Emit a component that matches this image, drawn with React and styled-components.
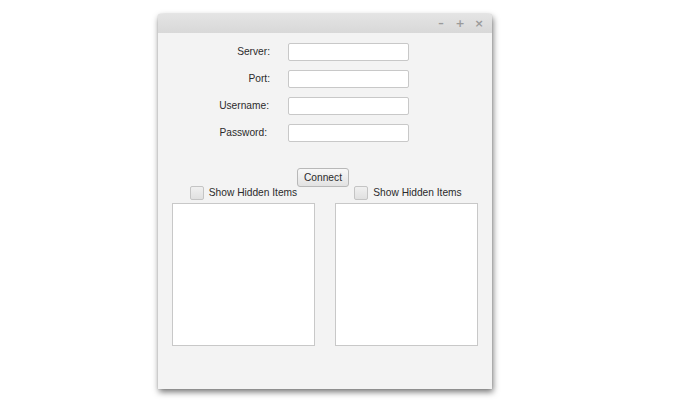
import React, { useState } from "react";
import styled, { createGlobalStyle } from "styled-components";

const GlobalStyle = createGlobalStyle`
  html, body {
    margin: 0;
    padding: 0;
    background: #ffffff;
    font-family: "Liberation Sans", "Open Sans", sans-serif;
  }
`;

const Page = styled.div`
  width: 700px;
  height: 400px;
  padding: 14px 0 0 158px;
  box-sizing: border-box;
`;

const Window = styled.div`
  width: 334px;
  height: 375px;
  background: #f3f3f3;
  border-radius: 3px 3px 0 0;
  box-shadow: 1px 3px 6px rgba(0, 0, 0, 0.55), 0 0 1px rgba(0, 0, 0, 0.3);
  display: flex;
  flex-direction: column;
`;

const TitleBar = styled.div`
  height: 19px;
  background: linear-gradient(#e4e4e4, #d8d8d8);
  border-radius: 3px 3px 0 0;
  display: flex;
  justify-content: flex-end;
  align-items: center;
  gap: 9px;
  padding-right: 8px;
`;

const TitleButton = styled.span`
  width: 10px;
  text-align: center;
  font-family: "DejaVu Sans", sans-serif;
  font-size: 11px;
  line-height: 11px;
  color: #9a9a9a;
  font-weight: bold;
`;

const Form = styled.div`
  display: grid;
  grid-template-columns: 112px 121px;
  column-gap: 18px;
  row-gap: 9px;
  padding-top: 10px;
`;

const Label = styled.label`
  text-align: right;
  font-size: 10.2px;
  line-height: 18px;
  color: #2b2b2b;
  padding-right: ${(p) => p.$shift || 0}px;
`;

const Input = styled.input`
  height: 18px;
  box-sizing: border-box;
  border: 1px solid #c8c8c8;
  border-radius: 2px;
  background: #fff;
  padding: 0 4px;
  font-size: 10px;
  outline: none;
`;

const ButtonRow = styled.div`
  display: flex;
  justify-content: center;
  margin-top: 26px;
  padding-right: 4px;
`;

const Button = styled.button`
  height: 19px;
  width: 52px;
  padding: 0;
  border: 1px solid #b8b8b8;
  border-radius: 3px;
  background: linear-gradient(#f8f8f8, #e2e2e2);
  font-family: inherit;
  font-size: 10.2px;
  color: #2b2b2b;
`;

const Panes = styled.div`
  display: grid;
  grid-template-columns: 143px 143px;
  column-gap: 20px;
  padding: 0 13px 0 14px;
  margin-top: -1px;
`;

const Pane = styled.div`
  display: flex;
  flex-direction: column;
  align-items: center;
  gap: 4px;
`;

const CheckRow = styled.label`
  display: flex;
  align-items: center;
  gap: 5px;
  font-size: 10.2px;
  color: #2b2b2b;
  height: 13px;
  margin-left: ${(p) => p.$offset || 0}px;
`;

const Box = styled.span`
  width: 12px;
  height: 12px;
  border: 1px solid #c4c4c4;
  border-radius: 2px;
  background: linear-gradient(#f0f0f0, #e0e0e0);
`;

const List = styled.div`
  width: 143px;
  height: 143px;
  box-sizing: border-box;
  background: #fff;
  border: 1px solid #c8c8c8;
`;

const fields = ["Server:", "Port:", "Username:", "Password:"];

export default function App() {
  const [values, setValues] = useState({});
  return (
    <Page>
      <GlobalStyle />
      <Window>
        <TitleBar>
          <TitleButton>–</TitleButton>
          <TitleButton>+</TitleButton>
          <TitleButton>×</TitleButton>
        </TitleBar>
        <Form>
          {fields.map((f, i) => (
            <React.Fragment key={f}>
              <Label $shift={i === 3 ? 3 : i === 2 ? 1 : 0}>{f}</Label>
              <Input
                value={values[f] || ""}
                onChange={(e) => setValues({ ...values, [f]: e.target.value })}
              />
            </React.Fragment>
          ))}
        </Form>
        <ButtonRow>
          <Button>Connect</Button>
        </ButtonRow>
        <Panes>
          <Pane>
            <CheckRow>
              <Box />
              Show Hidden Items
            </CheckRow>
            <List />
          </Pane>
          <Pane>
            <CheckRow $offset={3}>
              <Box />
              Show Hidden Items
            </CheckRow>
            <List />
          </Pane>
        </Panes>
      </Window>
    </Page>
  );
}
